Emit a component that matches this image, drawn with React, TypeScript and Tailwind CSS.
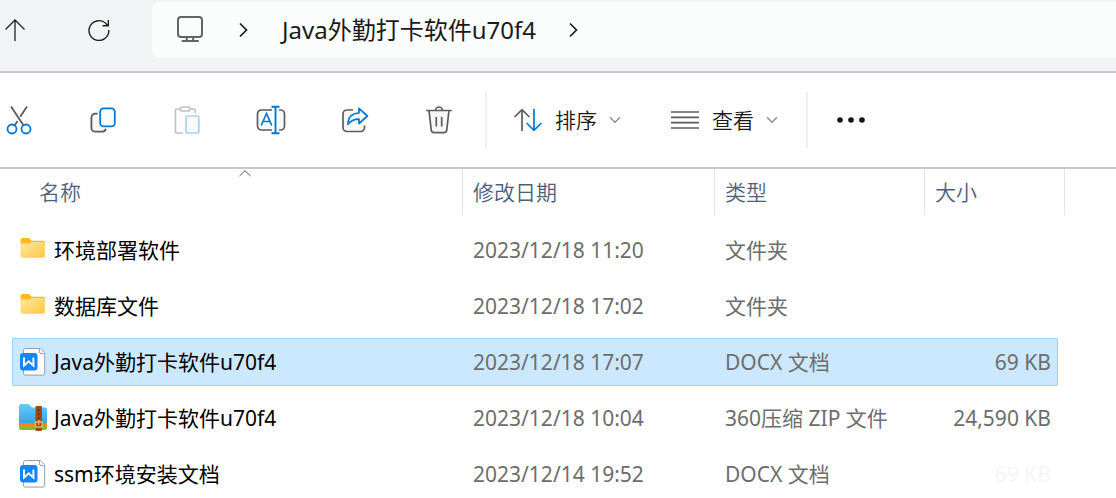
import type { ReactNode } from 'react';

type FileKind = 'folder' | 'docx' | 'zip';

type FileRow = {
  name: string;
  kind: FileKind;
  modified: string;
  type: string;
  size?: string;
  selected?: boolean;
  faded?: boolean;
};

const files: FileRow[] = [
  { name: '环境部署软件', kind: 'folder', modified: '2023/12/18 11:20', type: '文件夹' },
  { name: '数据库文件', kind: 'folder', modified: '2023/12/18 17:02', type: '文件夹' },
  { name: 'Java外勤打卡软件u70f4', kind: 'docx', modified: '2023/12/18 17:07', type: 'DOCX 文档', size: '69 KB', selected: true },
  { name: 'Java外勤打卡软件u70f4', kind: 'zip', modified: '2023/12/18 10:04', type: '360压缩 ZIP 文件', size: '24,590 KB' },
  { name: 'ssm环境安装文档', kind: 'docx', modified: '2023/12/14 19:52', type: 'DOCX 文档', size: '69 KB', faded: true },
];

const GRAY = '#5c5c5c';
const BLUE = '#0078d4';

function Chevron({ className }: { className: string }) {
  return (
    <svg width="9" height="16" viewBox="0 0 9 16" fill="none" stroke="currentColor" strokeWidth="1.7" className={className}>
      <path d="M1 1.5 7.5 8 1 14.5" />
    </svg>
  );
}

function ChevronDown() {
  return (
    <svg width="12" height="8" viewBox="0 0 12 8" fill="none" stroke="#8a8a8a" strokeWidth="1.3">
      <path d="M1 1.3 6 6.3 11 1.3" />
    </svg>
  );
}

function MonitorIcon() {
  return (
    <svg width="26" height="28" viewBox="0 0 26 28" fill="none" stroke="#646464" strokeWidth="2">
      <rect x="1" y="1" width="24" height="20" rx="3" />
      <path d="M9.8 21v4M16.2 21v4" />
      <path d="M5.5 25h15.500" strokeLinecap="round" />
    </svg>
  );
}

function CutIcon() {
  return (
    <svg width="28" height="30" viewBox="0 0 28 30" fill="none" strokeWidth="1.8">
      <path d="M6 1.5 18.600 20.500M22 1.500l-6.800 10.300M12.600 16 9.200 21" stroke={GRAY} />
      <circle cx="7" cy="24" r="4.500" stroke={BLUE} />
      <circle cx="21" cy="24" r="4.500" stroke={BLUE} />
    </svg>
  );
}

function CopyIcon() {
  return (
    <svg width="28" height="30" viewBox="0 0 28 30" fill="none" strokeWidth="1.8">
      <path d="M8.7 8.7H6.4A4 4 0 0 0 2.4 12.7v10a4 4 0 0 0 4 4h6.4c2 0 3.6-1 4-3" fill="#f7f7f7" stroke={GRAY} />
      <rect x="11.2" y="3.4" width="14.6" height="18" rx="3.4" fill="#fafafa" stroke={BLUE} />
    </svg>
  );
}

function PasteIcon() {
  return (
    <svg width="28" height="30" viewBox="0 0 28 30" fill="none" strokeWidth="1.7">
      <path d="M7.5 4H4.2A1.8 1.8 0 0 0 2.4 5.8v20.400A1.800 1.800 0 0 0 4.200 28H10M17.500 4h3a1.800 1.800 0 0 1 1.800 1.800V8" stroke="#c2c2c2" />
      <rect x="7.500" y="2" width="9.500" height="4" rx="2" stroke="#c2c2c2" />
      <rect x="13" y="11" width="12.800" height="17" rx="1.800" fill="#fafafa" stroke="#a5d2f3" />
    </svg>
  );
}

function RenameIcon() {
  return (
    <svg width="30" height="30" viewBox="0 0 30 30" fill="none" strokeWidth="1.7">
      <path d="M16 5H5.500A4 4 0 0 0 1.500 9v12a4 4 0 0 0 4 4H16M23 5h1.500a4 4 0 0 1 4 4v12a4 4 0 0 1-4 4H23" fill="#fafafa" stroke={GRAY} />
      <path d="M5.200 20.500 10.500 8.500 15.800 20.500M7 16.500h7" stroke={BLUE} />
      <path d="M15.500 1.800h8M15.500 28.200h8M19.500 2v26" stroke={BLUE} strokeWidth="1.9" />
    </svg>
  );
}

function ShareIcon() {
  return (
    <svg width="28" height="30" viewBox="0 0 28 30" fill="none" strokeWidth="1.7">
      <path d="M12 5H6A4 4 0 0 0 2 9v13.500a4 4 0 0 0 4 4h13.500a4 4 0 0 0 4-4V20.500" fill="#fafafa" stroke={GRAY} />
      <path d="M18 3.400 26.400 11 18 18.500v-4.400c-5 0-8.400 1.400-11 5.200 0-7.200 4-11 11-11.300Z" fill="#f4f9fd" stroke={BLUE} strokeLinejoin="round" />
    </svg>
  );
}

function TrashIcon() {
  return (
    <svg width="28" height="30" viewBox="0 0 28 30" fill="none" stroke={GRAY} strokeWidth="1.7">
      <path d="M4 5.500 6.200 24.700A3 3 0 0 0 9.200 27.600h9.600a3 3 0 0 0 3-2.900L24 5.500" fill="#f7f7f7" />
      <path d="M1.200 5.500h25.600M10.500 5.500a3.500 3.500 0 0 1 7 0M11.300 12v9.500M16.700 12v9.500" />
    </svg>
  );
}

function SortIcon() {
  return (
    <svg width="28" height="24" viewBox="0 0 28 24" fill="none" strokeWidth="1.7">
      <path d="M8 23V2M.6 9 8 1.700 15.400 9" stroke={GRAY} />
      <path d="M20 1v21M12.600 15 20 22.300 27.400 15" stroke={BLUE} />
    </svg>
  );
}

function ViewIcon() {
  return (
    <svg width="28" height="20" viewBox="0 0 28 20" fill="none" stroke={GRAY} strokeWidth="1.7">
      <path d="M0 2h28M0 7.300h28M0 12.600h28M0 18h28" />
    </svg>
  );
}

function FolderIcon() {
  return (
    <svg width="28" height="28" viewBox="0.5 2 28 28">
      <defs>
        <linearGradient id="folder" x1="0" y1="0" x2="1" y2="1">
          <stop offset="0" stopColor="#ffe8a3" />
          <stop offset="1" stopColor="#fcc93f" />
        </linearGradient>
      </defs>
      <path d="M1 6a2 2 0 0 1 2-2h6.500l2.700 2.800H24A1.500 1.500 0 0 1 25.300 8.300V12H1Z" fill="#fbb91b" />
      <path d="M1 9.600h8.600l2.700-1.600h13v14.300a1.500 1.500 0 0 1-1.500 1.500H2.500A1.500 1.500 0 0 1 1 22.300Z" fill="url(#folder)" />
    </svg>
  );
}

function DocxIcon() {
  return (
    <svg width="28" height="28" viewBox="0 0.5 28 28" fill="none">
      <path d="M6 1h14.300L24.700 5.300v20.500a1.800 1.800 0 0 1-1.800 1.800H5.300a1.800 1.800 0 0 1-1.800-1.800v-23A1.800 1.800 0 0 1 5.300 1Z" fill="#fafcff" stroke="#949eb0" />
      <path d="M19.500 1.100V4.300a1.800 1.800 0 0 0 1.800 1.800h3.300" fill="#fff" stroke="#949eb0" />
      <rect y="5.500" width="17.500" height="17.500" rx="3" fill="#1684fc" />
      <path d="M4 10v8.200l4.700-4.300 4.700 4.300V10" stroke="#fff" strokeWidth="1.9" />
    </svg>
  );
}

function ZipIcon() {
  return (
    <svg width="28" height="28" viewBox="1 0.5 28 28" overflow="visible">
      <defs>
        <linearGradient id="zip" x1="0" y1="0" x2="0" y2="1">
          <stop offset="0" stopColor="#63ccfa" />
          <stop offset="1" stopColor="#3ba4e9" />
        </linearGradient>
      </defs>
      <path d="M0 19h28v5.500a2 2 0 0 1-2 2H2a2 2 0 0 1-2-2Z" fill="#7ac52b" />
      <path d="M0 16h28v5.500a1.500 1.500 0 0 1-1.500 1.500h-25A1.500 1.500 0 0 1 0 21.500Z" fill="#ff8417" />
      <path d="M0 2.500A2 2 0 0 1 2 .5h7.500L13 4h13a2 2 0 0 1 2 2v12a1.500 1.500 0 0 1-1.500 1.500h-25A1.500 1.500 0 0 1 0 18Z" fill="url(#zip)" />
      <rect x="16.500" y="2.500" width="6.500" height="25" rx="1" fill="#9d4b13" />
      <path d="M19.750 6v11" stroke="#552306" strokeWidth="1.2" strokeDasharray="1.5 2.5" />
      <path d="M16.500 18.500h6.500v5h-6.500ZM19.750 16.500v5" fill="none" stroke="#eeb66b" strokeWidth="1.3" />
    </svg>
  );
}

const fileIcons: Record<FileKind, ReactNode> = {
  folder: <FolderIcon />,
  docx: <DocxIcon />,
  zip: <ZipIcon />,
};

const tools = [
  { label: '剪切', icon: <CutIcon /> },
  { label: '复制', icon: <CopyIcon /> },
  { label: '粘贴', icon: <PasteIcon />, disabled: true },
  { label: '重命名', icon: <RenameIcon /> },
  { label: '共享', icon: <ShareIcon /> },
  { label: '删除', icon: <TrashIcon /> },
];

function AddressBar() {
  return (
    <header className="flex shrink-0 border-b-2 border-[#c8c9cf] bg-[#f2f3f5] pt-0.5 pb-[13px]">
      <div className="-ml-[27px] flex">
        <button aria-label="向上" className="flex w-[84px] items-center justify-center">
          <svg width="22" height="22" viewBox="0 0 22 22" fill="none" stroke="#222" strokeWidth="1.3">
            <path d="M11 22V1M1.500 10.500 11 1l9.500 9.500" />
          </svg>
        </button>
        <button aria-label="刷新" className="flex w-[84px] items-center justify-center">
          <svg width="22" height="22" viewBox="0 0 22 22" fill="none" stroke="#222" strokeWidth="1.4">
            <path d="M20.800 11A9.900 9.900 0 1 1 18.500 5.200L19.800 6.500M20.300 1v5.800h-5.800" />
          </svg>
        </button>
      </div>
      <nav className="ml-[11px] flex h-14 flex-1 items-center rounded-l-lg bg-[#fbfcfc] pl-[25px] text-2xl text-[#1a1a1a]">
        <MonitorIcon />
        <Chevron className="ml-9" />
        <a href="#folder" className="ml-[34px] whitespace-nowrap">Java外勤打卡软件u70f4</a>
        <Chevron className="ml-[33px]" />
      </nav>
    </header>
  );
}

function Toolbar() {
  return (
    <div className="flex h-24 shrink-0 items-center border-b-2 border-[#c8c9cf] text-[21px] text-[#1a1a1a]">
      <div className="-ml-[23px] mr-1 flex">
        {tools.map((t) => (
          <button key={t.label} aria-label={t.label} disabled={t.disabled} className="flex h-14 w-[84px] items-center justify-center">
            {t.icon}
          </button>
        ))}
      </div>
      <div className="flex h-14 items-center gap-[50px] border-x-2 border-[#efefef] pr-7 pl-[27px]">
        <button className="flex items-center whitespace-nowrap">
          <SortIcon />
          <span className="mr-3 ml-[13px] pt-0.5 font-[350]">排序</span>
          <ChevronDown />
        </button>
        <button className="flex items-center whitespace-nowrap">
          <ViewIcon />
          <span className="mr-3 ml-[13px] pt-0.5 font-[350]">查看</span>
          <ChevronDown />
        </button>
      </div>
      <button aria-label="更多" className="ml-[29px]">
        <svg width="28" height="6" viewBox="0 0 28 6" fill="#151515">
          <circle cx="3" cy="3" r="2.8" />
          <circle cx="14" cy="3" r="2.8" />
          <circle cx="25" cy="3" r="2.8" />
        </svg>
      </button>
    </div>
  );
}

function HeaderCell({ children, first = false }: { children: ReactNode; first?: boolean }) {
  return (
    <th scope="col" className="h-[53px] p-0 text-left align-top font-[350]">
      <div className={`relative flex h-[46px] items-center border-r border-[#e3e3e3] pt-0.5 ${first ? 'pl-[27px]' : 'pl-2.5'}`}>
        {children}
        {first && (
          <svg width="12" height="7" viewBox="0 0 12 7" fill="none" stroke="#555" className="absolute top-px left-[227px]">
            <path d="M.5 6 6 .7 11.500 6" />
          </svg>
        )}
      </div>
    </th>
  );
}

function Row({ file }: { file: FileRow }) {
  const box = `flex h-12 items-center whitespace-nowrap border-y ${
    file.selected ? 'border-[#99d1ff] bg-[#cce8ff]' : 'border-transparent'
  }`;

  return (
    <tr>
      <td className="px-0 py-1">
        <div className={`${box} gap-1.5 rounded-l-xs border-l pl-[7px] text-black`}>
          {fileIcons[file.kind]}
          <span className="pt-0.5">{file.name}</span>
        </div>
      </td>
      <td className="px-0 py-1">
        <div className={`${box} pt-0.5 pl-2.5`}>{file.modified}</div>
      </td>
      <td className="px-0 py-1">
        <div className={`${box} pt-0.5 pl-2.5`}>{file.type}</div>
      </td>
      <td className="py-1 pr-[7px] pl-0">
        <div className={`${box} justify-end rounded-r-xs border-r pt-0.5 pr-1.5 ${file.faded ? 'text-[#f6f6f6]' : ''}`}>{file.size}</div>
      </td>
      <td />
    </tr>
  );
}

export default function App() {
  return (
    <div className="flex h-screen flex-col overflow-hidden bg-white font-['Noto_Sans','Noto_Sans_CJK_SC',sans-serif]">
      <AddressBar />
      <Toolbar />
      <main className="min-h-0 flex-1 overflow-hidden pl-3">
        <table className="w-full table-fixed border-separate border-spacing-0 text-[21px] text-[#6d6d6d]">
          <colgroup>
            <col className="w-[451px]" />
            <col className="w-[252px]" />
            <col className="w-[210px]" />
            <col className="w-[140px]" />
            <col />
          </colgroup>
          <thead className="text-[#4c607a]">
            <tr>
              <HeaderCell first>名称</HeaderCell>
              <HeaderCell>修改日期</HeaderCell>
              <HeaderCell>类型</HeaderCell>
              <HeaderCell>大小</HeaderCell>
              <td />
            </tr>
          </thead>
          <tbody>
            {files.map((f, i) => (
              <Row key={i} file={f} />
            ))}
          </tbody>
        </table>
      </main>
    </div>
  );
}
